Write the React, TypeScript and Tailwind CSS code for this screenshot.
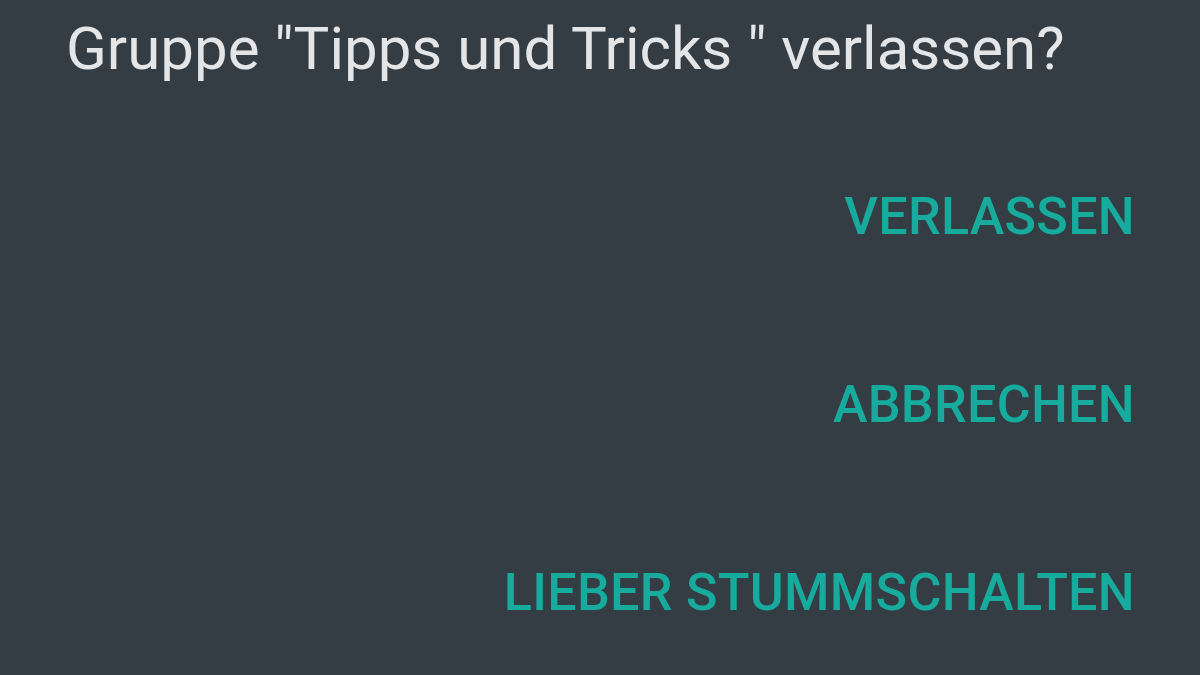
export default function App() {
  const actions = ['VERLASSEN', 'ABBRECHEN', 'LIEBER STUMMSCHALTEN'];

  return (
    <main className="w-[1200px] h-[675px] overflow-hidden bg-[#343d44] font-['Roboto',sans-serif]">
      <div className="pl-[66px] pt-[14px]">
        <h1 className="text-[#e3e5e7] text-[60px] leading-[70px] font-normal">
          Gruppe "Tipps und Tricks " verlassen?
        </h1>
      </div>
      <div className="flex flex-col items-end pr-[65px] pt-[103px] gap-[128px]">
        {actions.map((label) => (
          <button
            key={label}
            className="text-[#16ab9c] text-[52px] leading-[60px] font-medium tracking-[0.3px]"
          >
            {label}
          </button>
        ))}
      </div>
    </main>
  );
}
